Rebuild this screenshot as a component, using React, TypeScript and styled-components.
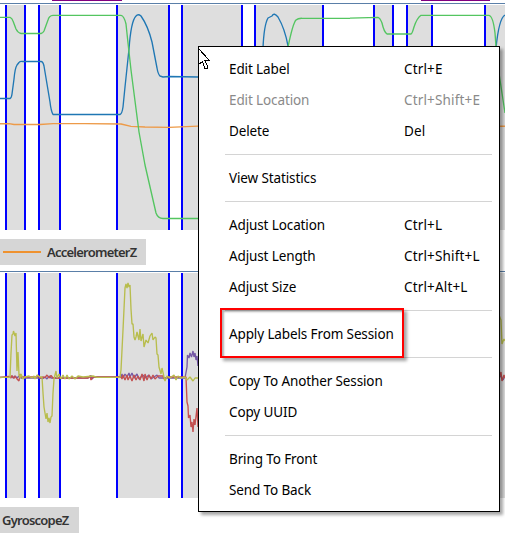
import React from "react";
import styled, { createGlobalStyle } from "styled-components";

const GlobalStyle = createGlobalStyle`
  html, body { margin: 0; padding: 0; background: #fff; overflow: hidden; }
  * { box-sizing: border-box; }
`;

const Screen = styled.main`
  position: relative;
  width: 505px;
  height: 538px;
  overflow: hidden;
  display: flex;
  flex-direction: column;
  background: #fff;
  font-family: "Noto Sans", "Open Sans", sans-serif;
`;

const Track = styled.div`
  height: 3px;
  flex: none;
  display: flex;
  align-items: flex-start;
  padding-left: 52px;
  gap: 299px;
`;

const TrackLabel = styled.div<{ $width: number }>`
  width: ${(p) => p.$width}px;
  height: 1px;
  background: #800080;
`;

const Plot = styled.section`
  flex: none;
  border-top: 1px solid #5a7fa8;
  padding-top: 1px;
`;

const PlotCanvas = styled.svg`
  display: block;
`;

const Legend = styled.div<{ $width: number; $indent: number }>`
  flex: none;
  display: flex;
  align-items: center;
  gap: 6px;
  width: ${(p) => p.$width}px;
  height: 26px;
  margin: 9px 0 6px;
  padding-left: ${(p) => p.$indent}px;
  background: #d6d6d6;
  color: #333;
  font-size: 13px;
  font-weight: 600;
  line-height: 26px;
  letter-spacing: -0.77px;
  white-space: nowrap;
`;

const LegendText = styled.span`
  height: 26px;
`;

const Swatch = styled.span`
  flex: none;
  width: 38px;
  height: 2px;
  background: #ef922f;
`;

const Menu = styled.div`
  position: absolute;
  left: 198px;
  top: 46px;
  width: 302px;
  height: 466px;
  padding: 7px 7px 5px 26px;
  border: 1px solid #000;
  background: #fff;
  box-shadow: 3px 3px 3px rgba(0, 0, 0, 0.35);
`;

const MenuRow = styled.div<{ $disabled?: boolean }>`
  display: grid;
  grid-template-columns: 175px 1fr;
  align-items: center;
  height: 31px;
  padding: 0 0 2px 4px;
  color: ${(p) => (p.$disabled ? "#8a8a8a" : "#000")};
  font-size: 13.5px;
  line-height: 20px;
  white-space: nowrap;
`;

const Spaced = styled.span<{ $tracking: number }>`
  letter-spacing: ${(p) => p.$tracking}px;
`;

const Separator = styled.div`
  height: 1px;
  margin: 7px 0 8px;
  background: #d4d4d4;
`;

const Highlight = styled.div`
  position: absolute;
  left: 220px;
  top: 308px;
  width: 184px;
  height: 50px;
  border: 2px solid #f00;
  box-shadow: 3px 3px 3px rgba(0, 0, 0, 0.35), inset 2px 2px 2px rgba(0, 0, 0, 0.3);
`;

const Pointer = styled.svg`
  position: absolute;
  left: 198px;
  top: 48px;
`;

const regions = [
  [5, 26], [38, 61], [116, 170], [181, 243],
  [254, 324], [373, 394], [406, 433], [484, 507],
];

function Regions() {
  return (
    <g shapeRendering="crispEdges">
      {regions.map(([a, b]) => (
        <g key={a}>
          <rect x={a} width={b - a} height="225" fill="#dedede" />
          <rect x={a} width="2" height="225" fill="#0000ff" />
          <rect x={b - 2} width="2" height="225" fill="#0000ff" />
        </g>
      ))}
    </g>
  );
}

function Accelerometer() {
  return (
    <PlotCanvas width="505" height="225" viewBox="0 5 505 225">
      <g transform="translate(0 5)"><Regions /></g>
      <g fill="none" strokeWidth="1.35" strokeLinejoin="round">
        <path stroke="#ed9a48" d="M0 123.7 9 123.7 14 124.5H40L53 123.6 85 123.7 121 124 131 126.3 145 127 169 127.3 198 126.1H300L490 126.2H505" />
        <path stroke="#1f77b4" d="M0 98.5H10Q11.5 98 12 94L14 79Q15 68 17 65L19 62.5Q20 61 23 61.5H41Q43 61.5 44 66L50 102Q51 111 53 114.5L120 114.5Q122 114 123 107L125 87L129 49Q131 21 136 16Q138 13.5 141 16Q148 26 152 42L157 68Q158 74 160 76L163 77 169 76.5 198 77" />
        <path stroke="#1f77b4" d="M263 48Q264 25 268 18L272 16Q274 12 278 17Q285 29 288 46M496 48Q499 18 505 15" />
        <path stroke="#53c560" d="M0 17.3H10Q12 18 13 21L16 29Q18 33 21 33.5H41Q43 33 44 31L48 20Q49 15.5 53 15.3H121Q124 15.5 126 24L128 43 131 70 139 132 145 165 156 213Q158 218.5 163 218.5H198" />
        <path stroke="#53c560" d="M288 47Q293 23 296 20Q298 18.2 302 18.3L350 18.2 378 17.4Q380 18 382 23Q384 32 387 34H411Q412 34 414 27Q417 18 421 15.3H489Q493 16 495 33L497 60 505 113" />
      </g>
    </PlotCanvas>
  );
}

function Gyroscope() {
  return (
    <PlotCanvas width="505" height="225" viewBox="0 273 505 225">
      <g transform="translate(0 273)"><Regions /></g>
      <g fill="none" strokeWidth="1.35" strokeLinejoin="bevel">
        <path stroke="#7659a5" d="M0 377.3H10L12 376 13 378 15 376 17 378 19 376 21 378H41L43 378.5 45 377 47 379 49 376 51 378H88L91 375.5 92 379 94 377H121L122 374 123 378 125 374 127 377 129 373 130 377 132 373 134 378 137 374 139 379 143 375 145 378 149 375 151 379 157 375 159 378H185L187 367 187.5 355 189 358 190 353 191.5 357 193 351 194 357 195 353 196 360 197 356 198 366" />
        <path stroke="#c35050" d="M0 377.5 9 376.5 11 378 12 375.5 14 378.5 15 376 17 379 19 381 20 374 21 377H37L38 375 40 378 43 377 45 377.7 47 375 49 378 51 375.5 53 378H88L90 376 91 380 93 377H121L122 379 123 375 125 380 127 375 128 380 130 376 132 381 134 375 136 380 138 376 140 380 142 374 144 381 145 374 147 380 149 375 151 379 153 375 155 379 158 376H163L164 379 168 377H186L187 402 188 406 188.5 418 190 415 191 427 192 422 193 432 194 419 195 425 197 408 198 427" />
        <path stroke="#b8bd4d" d="M0 377.4H10L11 353 12 335 13 334 13.5 331 15 336 16 333 17 371 18 352 19 375 20 378 21 374 23 379 25 377 29 376 32 378 34 376 35 379 37 375 40 377H42L43 393 44 407 46 419 47 413 48 422 49 418 50 423 51 417 52 416 53 393 54 379 56 371 57 378 59 374 61 379 63 375 65 379 67 375 69 379 72 376 75 379 78 376 83 377 93 376 97 377.4H120L121 370 123 330 125 288 126 284 127 288 128 283 129 287 130 285 131 309 132 324 133 324 134 337 135 340 136 337 137 332 139 340 140 329 141 341 143 334 144 347 146 340 148 343 150 336 152 333 153 340 155 337 156 338 157 354 158 355 159 367 161 374 162 368 164 377 165 381 167 376 170 378 174 375 176 380 178 376 181 378 185 377 187 380 190 377 193 381 195 378 198 378" />
        <path stroke="#b8bd4d" d="M499 315 501 320 502 344 504 339 505 341" />
        <path stroke="#7659a5" d="M499 374 501 377 503 380 505 376" />
        <path stroke="#c35050" d="M499 378 501 372 502 381 504 375 505 378" />
      </g>
    </PlotCanvas>
  );
}

type Item = { label: string; keys?: string; disabled?: boolean };
const groups: Item[][] = [
  [
    { label: "Edit Label", keys: "Ctrl+E" },
    { label: "Edit Location", keys: "Ctrl+Shift+E", disabled: true },
    { label: "Delete", keys: "Del" },
  ],
  [{ label: "View Statistics" }],
  [
    { label: "Adjust Location", keys: "Ctrl+L" },
    { label: "Adjust Length", keys: "Ctrl+Shift+L" },
    { label: "Adjust Size", keys: "Ctrl+Alt+L" },
  ],
  [{ label: "Apply Labels From Session" }],
  [{ label: "Copy To Another Session" }, { label: "Copy UUID" }],
  [{ label: "Bring To Front" }, { label: "Send To Back" }],
];

export default function App() {
  return (
    <Screen>
      <GlobalStyle />
      <Track>
        <TrackLabel $width={70} />
        <TrackLabel $width={69} />
      </Track>
      <Plot><Accelerometer /></Plot>
      <Legend $width={146} $indent={3}><Swatch /><LegendText>AccelerometerZ</LegendText></Legend>
      <Plot><Gyroscope /></Plot>
      <Legend $width={79} $indent={2}><LegendText>GyroscopeZ</LegendText></Legend>
      <Menu>
        {groups.map((items, i) => (
          <React.Fragment key={i}>
            {i > 0 && <Separator />}
            {items.map((item) => (
              <MenuRow key={item.label} $disabled={item.disabled}>
                <Spaced $tracking={-0.12}>{item.label}</Spaced>
                {item.keys && <Spaced $tracking={0.16}>{item.keys}</Spaced>}
              </MenuRow>
            ))}
          </React.Fragment>
        ))}
      </Menu>
      <Highlight />
      <Pointer width="13" height="22" viewBox="0 0 13 22">
        <path d="M.5 .5V16.5L4.5 13.5 7 20.5H9.5V18.5L7 12.5H11.5Z" fill="#fff" stroke="#000" shapeRendering="crispEdges" />
      </Pointer>
    </Screen>
  );
}
